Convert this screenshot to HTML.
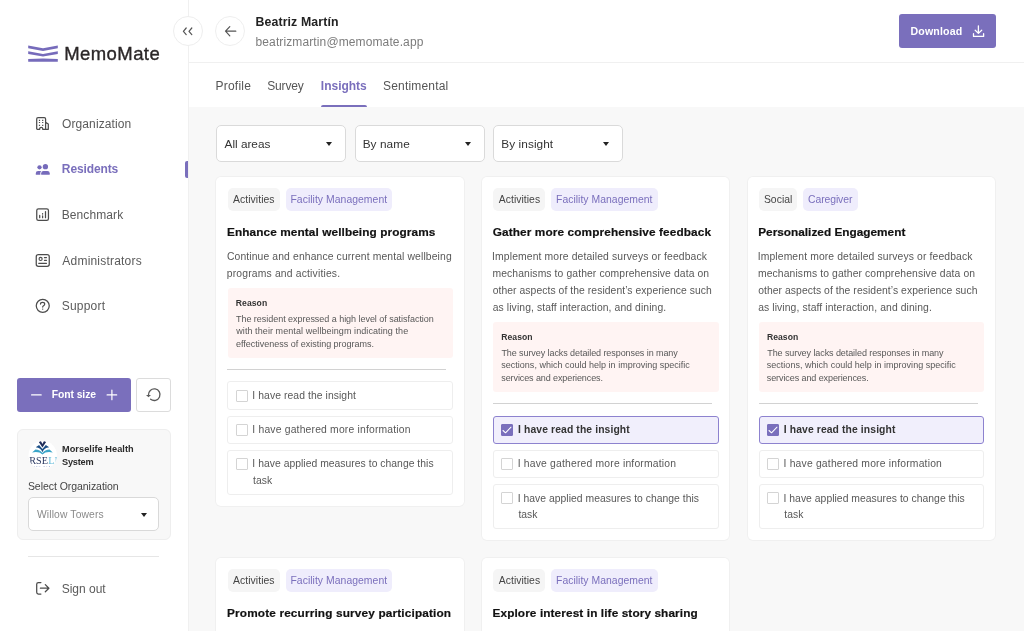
<!DOCTYPE html>
<html lang="en">
<head>
<meta charset="utf-8">
<title>MemoMate</title>
<style>
*{box-sizing:border-box;margin:0;padding:0}
html,body{width:1024px;height:631px;overflow:hidden;background:#f8f8f8;font-family:"Liberation Sans",sans-serif;color:#333}
.t{position:absolute;white-space:nowrap;display:block}
#app{position:absolute;left:0;top:0;width:1024px;height:631px;overflow:hidden;will-change:transform}
.abs{position:absolute}
svg{position:absolute;overflow:visible}
#side{position:absolute;left:0;top:0;width:189px;height:631px;background:#fff;border-right:1px solid #f0f0f0}
#actbar{position:absolute;left:185px;top:161px;width:3px;height:17px;background:#7a6fbc;border-radius:2px 0 0 2px}
#fs{position:absolute;left:17px;top:378px;width:114px;height:34px;background:#7a6fbc;border-radius:3px}
#rst{position:absolute;left:136px;top:378px;width:35px;height:34px;background:#fff;border:1px solid #dcdcdc;border-radius:3px}
#org{position:absolute;left:17px;top:429px;width:154px;height:111px;background:#f8f8f8;border:1px solid #eeeeee;border-radius:6px}
#orgsel{position:absolute;left:28px;top:497px;width:131px;height:34px;background:#fff;border:1px solid #d9d9d9;border-radius:5px}
.caret{position:absolute;width:0;height:0;border-left:3px solid transparent;border-right:3px solid transparent;border-top:4px solid #222}
#sdiv{position:absolute;left:28px;top:556px;width:131px;height:1px;background:#e6e6e6}
#hdr{position:absolute;left:189px;top:0;width:835px;height:63px;background:#fff;border-bottom:1px solid #f0f0f0}
#tabs{position:absolute;left:189px;top:63px;width:835px;height:44px;background:#fff}
.circ{position:absolute;width:30px;height:30px;border-radius:50%;background:#fff;border:1px solid #eeeeee}
#dl{position:absolute;left:899px;top:14px;width:97px;height:34px;background:#7a6fbc;border-radius:3px}
#tabline{position:absolute;left:321.3px;top:105px;width:45.7px;height:2.4px;background:#7a6fbc;border-radius:2px 2px 0 0}
.fsel{position:absolute;top:125px;width:130px;height:37px;background:#fff;border:1px solid #dadada;border-radius:5px}
.card{position:absolute;width:247px;background:#fff;border-radius:5px;box-shadow:0 0 0 1px rgba(0,0,0,0.03)}
.tag{position:absolute;top:188px;height:23px;border-radius:5px;background:#f5f5f5}
.tag.p{background:#efedfc}
.reason{position:absolute;width:226px;height:70.5px;background:#fff4f3;border-radius:3px}
.hr{position:absolute;width:219px;height:1px;background:#d2d2d2}
.chk{position:absolute;width:226px;background:#fff;border:1px solid #eeeeee;border-radius:3px}
.chk.on{background:#f1effc;border-color:#8d82cf}
.cb{position:absolute;width:12px;height:12px;border:1px solid #d4d4d4;border-radius:1px;background:#fff}
.cb.on{background:#7a6fbc;border-color:#7a6fbc}
</style>
</head>
<body>
<div id="app">

<div id="side"></div>
<span class="t" id="brand" style="left:64.18px;top:41.01px;font-size:18.5px;line-height:26px;color:#2b2728;letter-spacing:0.431px;-webkit-text-stroke:0.35px #2b2728;">MemoMate</span>
<span class="t" id="nav0" style="left:62.04px;top:116.01px;font-size:12px;line-height:17px;color:#5b5b5b;letter-spacing:0.099px;">Organization</span>
<span class="t" id="nav1" style="left:61.85px;top:161.01px;font-size:12px;line-height:17px;color:#7a6fbc;font-weight:700;letter-spacing:-0.124px;">Residents</span>
<span class="t" id="nav2" style="left:61.66px;top:207.00px;font-size:12px;line-height:17px;color:#5b5b5b;letter-spacing:0.107px;">Benchmark</span>
<span class="t" id="nav3" style="left:62.36px;top:253.01px;font-size:12px;line-height:17px;color:#5b5b5b;letter-spacing:0.199px;">Administrators</span>
<span class="t" id="nav4" style="left:61.67px;top:298.01px;font-size:12px;line-height:17px;color:#5b5b5b;letter-spacing:0.220px;">Support</span>
<div id="actbar"></div>
<div id="fs"></div>
<span class="t" id="fs_t" style="left:51.79px;top:387.00px;font-size:10.4px;line-height:15px;color:#fff;font-weight:700;letter-spacing:-0.099px;">Font size</span>
<div id="rst"></div>
<div id="org"></div>
<span class="t" id="org1" style="left:62.03px;top:443.02px;font-size:9.2px;line-height:13px;color:#2a2a2a;font-weight:700;letter-spacing:0.045px;">Morselife Health</span>
<span class="t" id="org2" style="left:62.02px;top:456.01px;font-size:9.2px;line-height:13px;color:#2a2a2a;font-weight:700;letter-spacing:-0.209px;">System</span>
<span class="t" id="selorg" style="left:27.88px;top:479.01px;font-size:10.5px;line-height:15px;color:#444;letter-spacing:-0.046px;">Select Organization</span>
<div id="orgsel"></div><span class="caret" style="left:140.5px;top:513px"></span>
<span class="t" id="willow" style="left:37.00px;top:508.00px;font-size:10.3px;line-height:14px;color:#8a8a8a;letter-spacing:0.134px;">Willow Towers</span>
<div id="sdiv"></div>
<span class="t" id="signout" style="left:61.72px;top:581.01px;font-size:12px;line-height:17px;color:#5b5b5b;letter-spacing:-0.016px;">Sign out</span>
<div id="hdr"></div><div id="tabs"></div>
<div class="circ" style="left:173px;top:16px"></div>
<div class="circ" style="left:215px;top:16px"></div>
<span class="t" id="uname" style="left:255.51px;top:14.00px;font-size:12.3px;line-height:17px;color:#222;font-weight:700;letter-spacing:0.128px;">Beatriz Martín</span>
<span class="t" id="umail" style="left:255.53px;top:34.01px;font-size:12px;line-height:17px;color:#7c7c7c;letter-spacing:0.117px;">beatrizmartin@memomate.app</span>
<div id="dl"></div>
<span class="t" id="dl_t" style="left:910.58px;top:24.00px;font-size:10.6px;line-height:15px;color:#fff;font-weight:700;letter-spacing:0.141px;">Download</span>
<span class="t" id="tab0" style="left:215.51px;top:78.01px;font-size:12px;line-height:17px;color:#555;letter-spacing:0.228px;">Profile</span>
<span class="t" id="tab1" style="left:267.16px;top:78.01px;font-size:12px;line-height:17px;color:#555;letter-spacing:-0.133px;">Survey</span>
<span class="t" id="tab2" style="left:320.84px;top:78.01px;font-size:12px;line-height:17px;color:#7a6fbc;font-weight:700;letter-spacing:-0.006px;">Insights</span>
<span class="t" id="tab3" style="left:383.00px;top:78.01px;font-size:12px;line-height:17px;color:#555;letter-spacing:0.181px;">Sentimental</span>
<div id="tabline"></div>
<div class="fsel" style="left:216px"></div><span class="caret" style="left:326.3px;top:142px"></span>
<span class="t" id="fsel0" style="left:224.55px;top:136.01px;font-size:11.8px;line-height:17px;color:#333;letter-spacing:-0.011px;">All areas</span>
<div class="fsel" style="left:355px"></div><span class="caret" style="left:465.3px;top:142px"></span>
<span class="t" id="fsel1" style="left:362.68px;top:136.01px;font-size:11.8px;line-height:17px;color:#333;letter-spacing:0.083px;">By name</span>
<div class="fsel" style="left:493px"></div><span class="caret" style="left:603.3px;top:142px"></span>
<span class="t" id="fsel2" style="left:501.36px;top:136.01px;font-size:11.8px;line-height:17px;color:#333;letter-spacing:0.068px;">By insight</span>
<div class="card" style="left:216px;top:177px;width:248px;height:329px"></div>
<div class="tag" style="left:227.6px;top:188px;width:52.2px"></div>
<span class="t" id="c0tag0" style="left:233.10px;top:192.01px;font-size:10.4px;line-height:15px;color:#444;letter-spacing:0.050px;">Activities</span>
<div class="tag p" style="left:285.6px;top:188px;width:106.8px"></div>
<span class="t" id="c0tag1" style="left:290.43px;top:192.01px;font-size:10.4px;line-height:15px;color:#7a6fbc;letter-spacing:0.045px;">Facility Management</span>
<span class="t" id="c0ttl" style="left:227.05px;top:224.01px;font-size:11.8px;line-height:17px;color:#111;font-weight:700;letter-spacing:0.096px;-webkit-text-stroke:0.2px #111;">Enhance mental wellbeing programs</span>
<span class="t" id="c0d0" style="left:226.91px;top:250.01px;font-size:10.35px;line-height:14px;color:#585858;letter-spacing:0.129px;">Continue and enhance current mental wellbeing</span>
<span class="t" id="c0d1" style="left:226.78px;top:267.01px;font-size:10.35px;line-height:14px;color:#585858;letter-spacing:0.177px;">programs and activities.</span>
<div class="reason" style="left:227.5px;top:287.67px;width:225.7px"></div>
<span class="t" id="c0rl" style="left:235.77px;top:297.00px;font-size:8.6px;line-height:12px;color:#333;font-weight:700;letter-spacing:0.065px;">Reason</span>
<span class="t" id="c0r0" style="left:236.00px;top:313.01px;font-size:9px;line-height:13px;color:#585858;letter-spacing:-0.036px;">The resident expressed a high level of satisfaction</span>
<span class="t" id="c0r1" style="left:236.22px;top:325.01px;font-size:9px;line-height:13px;color:#585858;letter-spacing:0.080px;">with their mental wellbeingm indicating the</span>
<span class="t" id="c0r2" style="left:235.94px;top:338.00px;font-size:9px;line-height:13px;color:#585858;letter-spacing:-0.008px;">effectiveness of existing programs.</span>
<div class="hr" style="left:227.4px;top:369.1px"></div>
<div class="chk" style="left:227.4px;top:381.4px;width:225.7px;height:28.2px"></div>
<span class="cb" style="left:235.8px;top:389.7px"></span>
<span class="t" id="c0k0" style="left:252.37px;top:389.01px;font-size:10.35px;line-height:14px;color:#585858;letter-spacing:0.080px;">I have read the insight</span>
<div class="chk" style="left:227.4px;top:415.6px;width:225.7px;height:28.2px"></div>
<span class="cb" style="left:235.8px;top:423.9px"></span>
<span class="t" id="c0k1" style="left:252.37px;top:423.01px;font-size:10.35px;line-height:14px;color:#585858;letter-spacing:0.186px;">I have gathered more information</span>
<div class="chk" style="left:227.4px;top:449.8px;width:225.7px;height:45px"></div>
<span class="cb" style="left:235.8px;top:458.1px"></span>
<span class="t" id="c0k2" style="left:252.37px;top:457.01px;font-size:10.35px;line-height:14px;color:#585858;letter-spacing:0.033px;">I have applied measures to change this</span>
<span class="t" id="c0k3" style="left:253.04px;top:474.01px;font-size:10.35px;line-height:14px;color:#585858;letter-spacing:0.018px;">task</span>
<div class="card" style="left:482px;top:177px;width:247px;height:363px"></div>
<div class="tag" style="left:493.2px;top:188px;width:52.2px"></div>
<span class="t" id="c1tag0" style="left:498.78px;top:192.01px;font-size:10.4px;line-height:15px;color:#444;letter-spacing:0.037px;">Activities</span>
<div class="tag p" style="left:551.2px;top:188px;width:106.8px"></div>
<span class="t" id="c1tag1" style="left:556.00px;top:192.01px;font-size:10.4px;line-height:15px;color:#7a6fbc;letter-spacing:0.034px;">Facility Management</span>
<span class="t" id="c1ttl" style="left:492.74px;top:224.01px;font-size:11.8px;line-height:17px;color:#111;font-weight:700;letter-spacing:0.117px;-webkit-text-stroke:0.2px #111;">Gather more comprehensive feedback</span>
<span class="t" id="c1d0" style="left:492.10px;top:250.01px;font-size:10.35px;line-height:14px;color:#585858;letter-spacing:0.132px;">Implement more detailed surveys or feedback</span>
<span class="t" id="c1d1" style="left:492.49px;top:267.01px;font-size:10.35px;line-height:14px;color:#585858;letter-spacing:0.109px;">mechanisms to gather comprehensive data on</span>
<span class="t" id="c1d2" style="left:492.69px;top:284.01px;font-size:10.35px;line-height:14px;color:#585858;letter-spacing:0.067px;">other aspects of the resident’s experience such</span>
<span class="t" id="c1d3" style="left:492.71px;top:301.01px;font-size:10.35px;line-height:14px;color:#585858;letter-spacing:0.101px;">as living, staff interaction, and dining.</span>
<div class="reason" style="left:493.1px;top:321.81px;width:225.7px"></div>
<span class="t" id="c1rl" style="left:501.22px;top:331.00px;font-size:8.6px;line-height:12px;color:#333;font-weight:700;letter-spacing:0.064px;">Reason</span>
<span class="t" id="c1r0" style="left:501.38px;top:347.01px;font-size:9px;line-height:13px;color:#585858;letter-spacing:-0.076px;">The survey lacks detailed responses in many</span>
<span class="t" id="c1r1" style="left:501.29px;top:359.01px;font-size:9px;line-height:13px;color:#585858;letter-spacing:0.010px;">sections, which could help in improving specific</span>
<span class="t" id="c1r2" style="left:501.29px;top:372.02px;font-size:9px;line-height:13px;color:#585858;letter-spacing:-0.099px;">services and experiences.</span>
<div class="hr" style="left:493.0px;top:403.2px"></div>
<div class="chk on" style="left:493.0px;top:415.5px;width:225.7px;height:28.2px"></div>
<span class="cb on" style="left:501.4px;top:423.8px"></span>
<svg style="left:501px;top:424px" width="12" height="12" viewBox="0 0 12 12"><path d="M2 6.5 L4.5 8.8 L10 3.2" fill="none" stroke="#fff" stroke-width="1.05" stroke-linecap="round" stroke-linejoin="round"/></svg>
<span class="t" id="c1k0" style="left:518.11px;top:423.01px;font-size:10.35px;line-height:14px;color:#333;font-weight:700;letter-spacing:0.109px;">I have read the insight</span>
<div class="chk" style="left:493.0px;top:449.7px;width:225.7px;height:28.2px"></div>
<span class="cb" style="left:501.4px;top:458.0px"></span>
<span class="t" id="c1k1" style="left:517.70px;top:457.01px;font-size:10.35px;line-height:14px;color:#585858;letter-spacing:0.191px;">I have gathered more information</span>
<div class="chk" style="left:493.0px;top:483.9px;width:225.7px;height:45px"></div>
<span class="cb" style="left:501.4px;top:492.2px"></span>
<span class="t" id="c1k2" style="left:517.70px;top:492.01px;font-size:10.35px;line-height:14px;color:#585858;letter-spacing:0.036px;">I have applied measures to change this</span>
<span class="t" id="c1k3" style="left:518.47px;top:508.01px;font-size:10.35px;line-height:14px;color:#585858;letter-spacing:0.014px;">task</span>
<div class="card" style="left:748px;top:177px;width:247px;height:363px"></div>
<div class="tag" style="left:758.8px;top:188px;width:38.3px"></div>
<span class="t" id="c2tag0" style="left:763.89px;top:192.01px;font-size:10.4px;line-height:15px;color:#444;letter-spacing:0.048px;">Social</span>
<div class="tag p" style="left:802.9px;top:188px;width:54.9px"></div>
<span class="t" id="c2tag1" style="left:808.06px;top:192.01px;font-size:10.4px;line-height:15px;color:#7a6fbc;letter-spacing:-0.094px;">Caregiver</span>
<span class="t" id="c2ttl" style="left:758.20px;top:224.01px;font-size:11.8px;line-height:17px;color:#111;font-weight:700;letter-spacing:0.013px;-webkit-text-stroke:0.2px #111;">Personalized Engagement</span>
<span class="t" id="c2d0" style="left:757.69px;top:250.01px;font-size:10.35px;line-height:14px;color:#585858;letter-spacing:0.129px;">Implement more detailed surveys or feedback</span>
<span class="t" id="c2d1" style="left:757.93px;top:267.01px;font-size:10.35px;line-height:14px;color:#585858;letter-spacing:0.120px;">mechanisms to gather comprehensive data on</span>
<span class="t" id="c2d2" style="left:758.13px;top:284.01px;font-size:10.35px;line-height:14px;color:#585858;letter-spacing:0.072px;">other aspects of the resident’s experience such</span>
<span class="t" id="c2d3" style="left:758.15px;top:301.01px;font-size:10.35px;line-height:14px;color:#585858;letter-spacing:0.107px;">as living, staff interaction, and dining.</span>
<div class="reason" style="left:758.7px;top:321.81px;width:225.7px"></div>
<span class="t" id="c2rl" style="left:766.91px;top:331.00px;font-size:8.6px;line-height:12px;color:#333;font-weight:700;letter-spacing:0.067px;">Reason</span>
<span class="t" id="c2r0" style="left:767.22px;top:347.01px;font-size:9px;line-height:13px;color:#585858;letter-spacing:-0.078px;">The survey lacks detailed responses in many</span>
<span class="t" id="c2r1" style="left:766.76px;top:359.01px;font-size:9px;line-height:13px;color:#585858;letter-spacing:0.022px;">sections, which could help in improving specific</span>
<span class="t" id="c2r2" style="left:766.76px;top:372.02px;font-size:9px;line-height:13px;color:#585858;letter-spacing:-0.088px;">services and experiences.</span>
<div class="hr" style="left:758.6px;top:403.2px"></div>
<div class="chk on" style="left:758.6px;top:415.5px;width:225.7px;height:28.2px"></div>
<span class="cb on" style="left:767.0px;top:423.8px"></span>
<svg style="left:767px;top:424px" width="12" height="12" viewBox="0 0 12 12"><path d="M2 6.5 L4.5 8.8 L10 3.2" fill="none" stroke="#fff" stroke-width="1.05" stroke-linecap="round" stroke-linejoin="round"/></svg>
<span class="t" id="c2k0" style="left:783.79px;top:423.01px;font-size:10.35px;line-height:14px;color:#333;font-weight:700;letter-spacing:0.110px;">I have read the insight</span>
<div class="chk" style="left:758.6px;top:449.7px;width:225.7px;height:28.2px"></div>
<span class="cb" style="left:767.0px;top:458.0px"></span>
<span class="t" id="c2k1" style="left:783.53px;top:457.01px;font-size:10.35px;line-height:14px;color:#585858;letter-spacing:0.193px;">I have gathered more information</span>
<div class="chk" style="left:758.6px;top:483.9px;width:225.7px;height:45px"></div>
<span class="cb" style="left:767.0px;top:492.2px"></span>
<span class="t" id="c2k2" style="left:783.53px;top:492.01px;font-size:10.35px;line-height:14px;color:#585858;letter-spacing:0.035px;">I have applied measures to change this</span>
<span class="t" id="c2k3" style="left:784.26px;top:508.01px;font-size:10.35px;line-height:14px;color:#585858;letter-spacing:0.062px;">task</span>
<div class="card" style="left:216px;top:558px;width:248px;height:120px"></div>
<div class="tag" style="left:227.6px;top:569px;width:52.2px"></div>
<span class="t" id="c3tag0" style="left:233.10px;top:573.01px;font-size:10.4px;line-height:15px;color:#444;letter-spacing:0.050px;">Activities</span>
<div class="tag p" style="left:285.6px;top:569px;width:106.8px"></div>
<span class="t" id="c3tag1" style="left:290.43px;top:573.01px;font-size:10.4px;line-height:15px;color:#7a6fbc;letter-spacing:0.045px;">Facility Management</span>
<span class="t" id="c3ttl" style="left:227.05px;top:605.01px;font-size:11.8px;line-height:17px;color:#111;font-weight:700;letter-spacing:0.154px;-webkit-text-stroke:0.2px #111;">Promote recurring survey participation</span>
<div class="card" style="left:482px;top:558px;width:247px;height:120px"></div>
<div class="tag" style="left:493.2px;top:569px;width:52.2px"></div>
<span class="t" id="c4tag0" style="left:498.78px;top:573.01px;font-size:10.4px;line-height:15px;color:#444;letter-spacing:0.037px;">Activities</span>
<div class="tag p" style="left:551.2px;top:569px;width:106.8px"></div>
<span class="t" id="c4tag1" style="left:556.00px;top:573.01px;font-size:10.4px;line-height:15px;color:#7a6fbc;letter-spacing:0.034px;">Facility Management</span>
<span class="t" id="c4ttl" style="left:492.49px;top:605.01px;font-size:11.8px;line-height:17px;color:#111;font-weight:700;letter-spacing:0.107px;-webkit-text-stroke:0.2px #111;">Explore interest in life story sharing</span>
<!-- brand mark -->
<svg style="left:26px;top:44px" width="34" height="20" viewBox="26 44 34 20"><path fill="#766bbb" d="M28.2 45.6 L43 48.2 L57.8 45.6 V48.2 L43 50.9 L28.2 48.2Z M28.2 51.3 L43 53.9 L57.8 51.3 V53.9 L43 56.6 L28.2 53.9Z M28.2 59 Q43 57.9 57.8 59 V61.8 H28.2Z"/></svg>
<!-- collapse chevrons -->
<svg style="left:178px;top:24px" width="20" height="14" viewBox="178 24 20 14"><path fill="none" stroke="#555" stroke-width="1.2" stroke-linecap="round" stroke-linejoin="round" d="M186.2 28 L183.4 31.3 L186.2 34.6 M191.8 28 L189 31.3 L191.8 34.6"/></svg>
<!-- back arrow -->
<svg style="left:222px;top:24px" width="18" height="14" viewBox="222 24 18 14"><path fill="none" stroke="#555" stroke-width="1.2" stroke-linecap="round" stroke-linejoin="round" d="M235.8 31.2 H225.6 M229.8 26.6 L225.5 31.2 L229.8 35.9"/></svg>
<!-- organization / building -->
<svg style="left:34px;top:115px" width="18" height="17" viewBox="34 115 18 17"><path fill="none" stroke="#4c4c4c" stroke-width="1.25" stroke-linejoin="round" d="M36.7 129.3 V119 Q36.7 117.7 38 117.7 H44.3 Q45.6 117.7 45.6 119 V129.3 M45.6 122.4 L48.3 124 V129.3 H42.7 V128.6 Q42.7 127.3 41.2 127.3 Q39.7 127.3 39.7 128.6 V129.3 H36.7"/><path fill="#4c4c4c" d="M38.9 119.8h1.2v1.2h-1.2z M42.1 119.8h1.2v1.2h-1.2z M38.9 121.9h1.2v1.2h-1.2z M42.1 121.9h1.2v1.2h-1.2z M38.9 124.7h1.2v1.2h-1.2z M42.1 124.7h1.2v1.2h-1.2z"/></svg>
<!-- residents / people (filled) -->
<svg style="left:34px;top:162px" width="18" height="15" viewBox="34 162 18 15"><g fill="#766bbb"><circle cx="39.5" cy="167.3" r="2.15"/><circle cx="45.4" cy="166.7" r="2.65"/><path d="M35.8 174.8 V173.2 Q35.8 170.9 38.1 170.9 H41.2 Q40.3 171.6 40.3 173 V174.8Z"/><path d="M41.2 174.8 V173.2 Q41.2 170.9 43.5 170.9 H47.4 Q49.7 170.9 49.7 173.2 V174.8Z"/></g></svg>
<!-- benchmark / poll -->
<svg style="left:34px;top:206px" width="18" height="17" viewBox="34 206 18 17"><rect x="36.75" y="208.85" width="11.7" height="11.6" rx="1.7" fill="none" stroke="#4c4c4c" stroke-width="1.25"/><path fill="none" stroke="#4c4c4c" stroke-width="1.25" stroke-linecap="round" d="M39.7 215.4 V217.7 M42.6 213.6 V214 M42.6 215.8 V217.7 M45.5 211.5 V217.7"/></svg>
<!-- administrators / contact card -->
<svg style="left:34px;top:252px" width="18" height="17" viewBox="34 252 18 17"><rect x="36.25" y="254.65" width="13" height="11.6" rx="2.1" fill="none" stroke="#4c4c4c" stroke-width="1.25"/><circle cx="40.6" cy="258.9" r="1.55" fill="none" stroke="#4c4c4c" stroke-width="1.15"/><path fill="none" stroke="#4c4c4c" stroke-width="1.15" stroke-linecap="round" d="M44.4 257.6 H46.5 M44.4 260.3 H46.5 M38.7 263.3 H46.5"/></svg>
<!-- support / question circle -->
<svg style="left:34px;top:297px" width="18" height="18" viewBox="34 297 18 18"><circle cx="42.75" cy="305.85" r="6.5" fill="none" stroke="#4c4c4c" stroke-width="1.25"/><path fill="none" stroke="#4c4c4c" stroke-width="1.25" stroke-linecap="round" d="M40.5 304.1 Q40.5 302.4 42.6 302.4 Q44.7 302.4 44.7 304.1 Q44.7 305.2 43.6 305.8 Q42.7 306.3 42.7 307.1"/><circle cx="42.7" cy="309.1" r="0.7" fill="#4c4c4c"/></svg>
<!-- sign out -->
<svg style="left:34px;top:580px" width="18" height="17" viewBox="34 580 18 17"><path fill="none" stroke="#4c4c4c" stroke-width="1.25" stroke-linecap="round" stroke-linejoin="round" d="M40.9 582.5 H38.4 Q36.7 582.5 36.7 584.2 V592.3 Q36.7 594 38.4 594 H40.9 M40.4 588.2 H48.8 M45.3 584.6 L48.9 588.2 L45.3 591.8"/></svg>
<!-- font size minus / plus -->
<svg style="left:28px;top:388px" width="92" height="14" viewBox="28 388 92 14"><path fill="none" stroke="#fff" stroke-width="1.2" stroke-linecap="round" d="M31.6 394.9 H41.2 M107.1 394.9 H116.7 M111.9 390.1 V399.7"/></svg>
<!-- reset -->
<svg style="left:144px;top:386px" width="20" height="18" viewBox="144 386 20 18"><path fill="none" stroke="#5a5a5a" stroke-width="1.3" stroke-linecap="round" d="M148.45 395.2 A5.8 5.8 0 1 1 150.6 399.2"/><path fill="#5a5a5a" d="M146 394.9 H151 L148.5 397.3Z"/></svg>
<!-- download -->
<svg style="left:970px;top:23px" width="18" height="17" viewBox="970 23 18 17"><path fill="none" stroke="#fff" stroke-width="1.3" stroke-linecap="round" stroke-linejoin="round" d="M978.4 25.8 V33.2 M975.2 30.3 L978.4 33.4 L981.7 30.3 M973.5 33.7 V36.4 H983.6 V33.7"/></svg>
<!-- organisation logo -->
<svg style="left:28px;top:440px" width="30" height="30" viewBox="28 440 30 30">
<defs><clipPath id="lc"><circle cx="42.7" cy="455.2" r="14.2"/></clipPath></defs>
<circle cx="42.7" cy="455.2" r="14.2" fill="#fff"/>
<g clip-path="url(#lc)">
<path fill="#3ba5c9" d="M32.1 452.4 L35.4 449.5 Q40 449.8 42.45 452.9 Q44.9 449.8 49.5 449.5 L52.8 452.4 Q46 451 42.45 454.4 Q38.9 451 32.1 452.4Z"/>
<path fill="#1b4f87" d="M35.7 447.2 L39.1 444.9 L42.45 448.9 L45.8 444.9 L49.2 447.2 Q44 447.8 42.45 452.3 Q40.9 447.8 35.7 447.2Z"/>
<path fill="#1f2d5a" d="M38.8 441.9 L40.9 441.1 L42.45 443.9 L44 441.1 L46.1 441.9 L42.45 447.6Z"/>
<text x="41.3" y="463.6" text-anchor="middle" font-family="'Liberation Serif',serif" font-size="10.2" letter-spacing="0.1" fill="#2b3962">MORSE<tspan fill="#62bad9">LIFE</tspan></text>
<text x="42.7" y="467.2" text-anchor="middle" font-family="'Liberation Sans',sans-serif" font-size="2.1" letter-spacing="1.3" fill="#6f86c0">HEALTH SYSTEM</text>
</g></svg>
</div>
</body>
</html>
